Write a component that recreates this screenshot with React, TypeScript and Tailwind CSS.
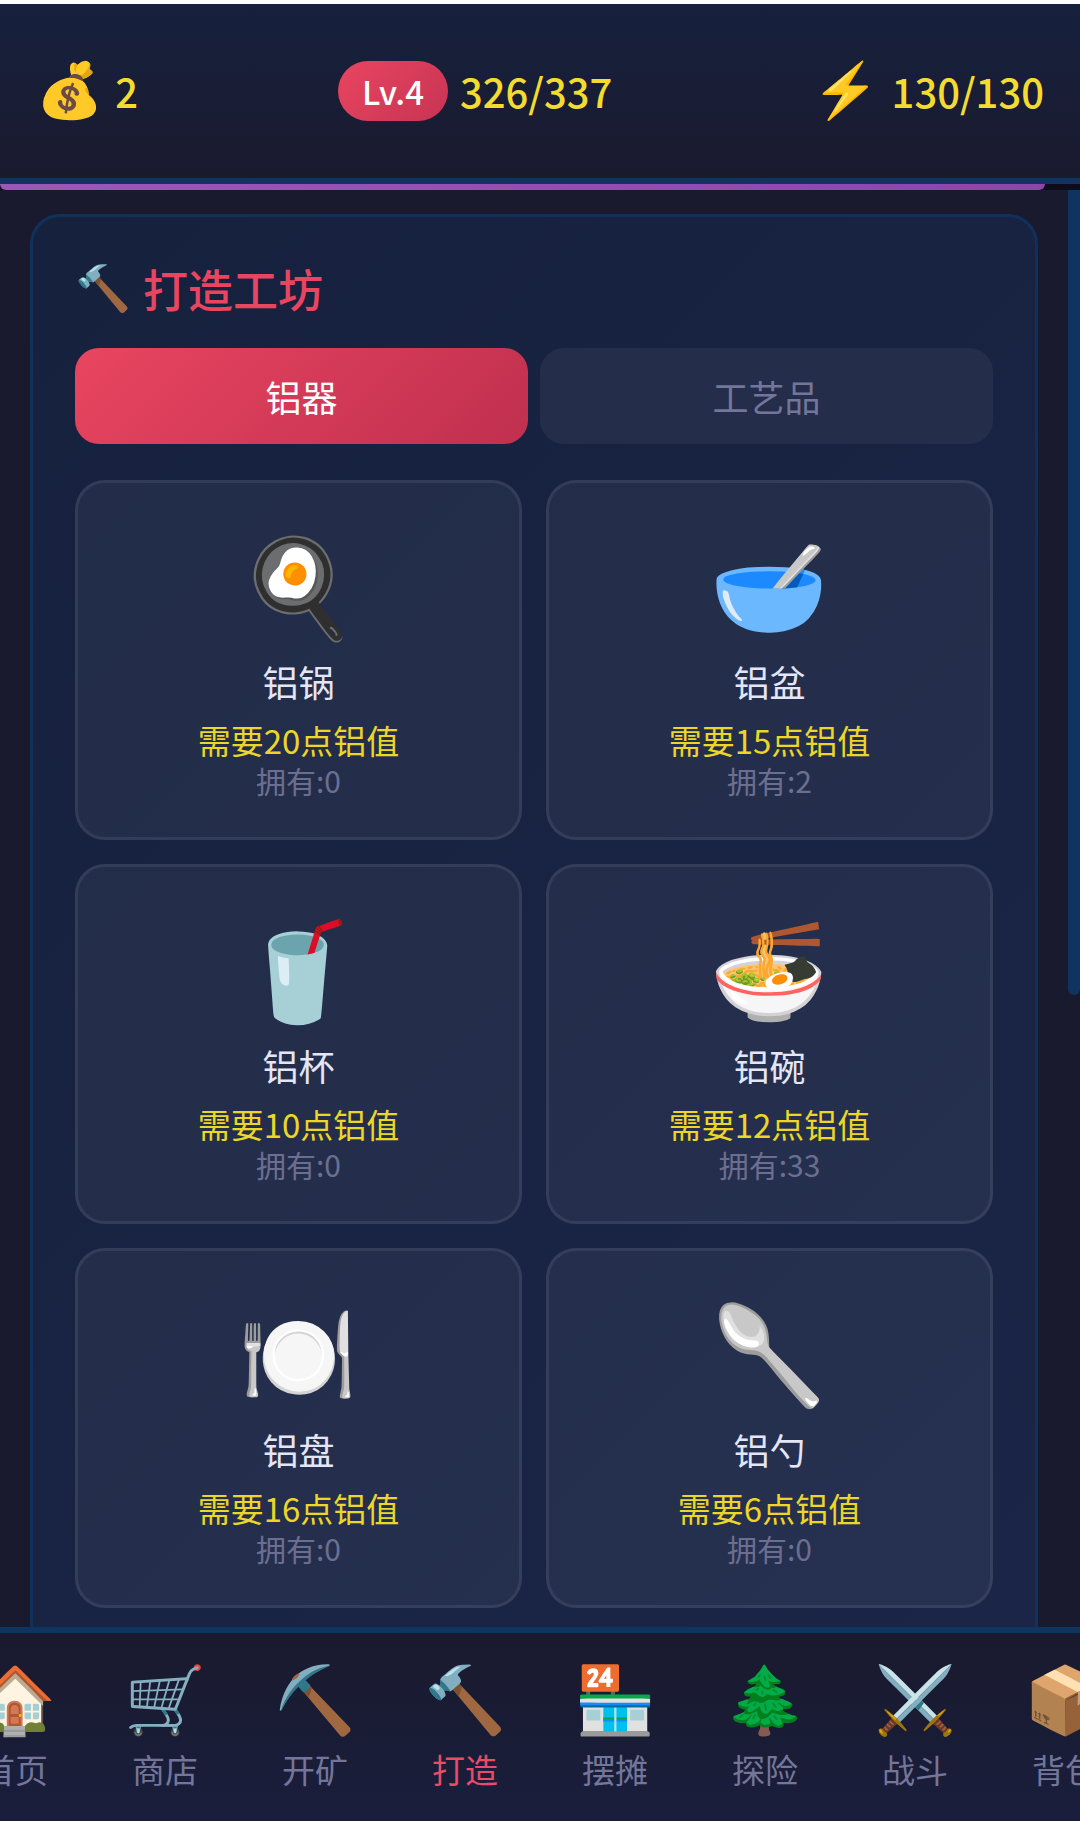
import { useState } from "react";

type Item = { icon: string; name: string; cost: number; owned: number };

const aluminium: Item[] = [
  { icon: "🍳", name: "铝锅", cost: 20, owned: 0 },
  { icon: "🥣", name: "铝盆", cost: 15, owned: 2 },
  { icon: "🥤", name: "铝杯", cost: 10, owned: 0 },
  { icon: "🍜", name: "铝碗", cost: 12, owned: 33 },
  { icon: "🍽️", name: "铝盘", cost: 16, owned: 0 },
  { icon: "🥄", name: "铝勺", cost: 6, owned: 0 },
];

const nav = [
  { icon: "🏠", label: "首页" },
  { icon: "🛒", label: "商店" },
  { icon: "⛏️", label: "开矿" },
  { icon: "🔨", label: "打造" },
  { icon: "🏪", label: "摆摊" },
  { icon: "🌲", label: "探险" },
  { icon: "⚔️", label: "战斗" },
  { icon: "📦", label: "背包" },
];

const tabs = ["铝器", "工艺品"];

function StatusBar() {
  return (
    <header className="flex h-[180px] shrink-0 items-center justify-between border-b-6 border-[#0f3460] bg-linear-to-b from-[#16213e] to-[#1a1a2e] px-9 text-[40px] leading-[60px] font-medium text-[#f2dc30]">
      <div className="flex items-center gap-3">
        <span className="font-['Noto_Color_Emoji',sans-serif] text-[54px]">💰</span>
        <span>2</span>
      </div>
      <div className="flex items-center gap-3">
        <span className="rounded-full bg-linear-135 from-[#e94560] to-[#c73453] px-6 text-[33px] text-white">Lv.4</span>
        <span>326/337</span>
      </div>
      <div className="flex items-center gap-3">
        <span className="font-['Noto_Color_Emoji',sans-serif] text-[54px]">⚡</span>
        <span>130/130</span>
      </div>
    </header>
  );
}

function ExperienceBar({ value, max }: { value: number; max: number }) {
  return (
    <div className="h-[6px] shrink-0 bg-[#0c0c1a]">
      <div
        className="h-full rounded-b-md bg-linear-to-r from-[#9b59b6] to-[#8e44ad]"
        style={{ width: `${(value / max) * 100}%` }}
      />
    </div>
  );
}

function ItemCard({ item }: { item: Item }) {
  return (
    <button
      type="button"
      className="flex h-[360px] flex-col items-center rounded-[30px] border-3 border-white/8 bg-white/5 pt-[51px]"
    >
      <span className="font-['Noto_Color_Emoji',sans-serif] text-[96px] leading-[108px]">{item.icon}</span>
      <span className="mt-3 text-[36px] leading-[54px] text-[#e4e6f6]">{item.name}</span>
      <span className="mt-3 text-[33px] leading-[40px] text-[#ecd626]">需要{item.cost}点铝值</span>
      <span className="text-[30px] leading-[40px] text-[#6c6e90]">拥有:{item.owned}</span>
    </button>
  );
}

export default function App() {
  const [tab, setTab] = useState(0);

  return (
    <div className="flex h-screen flex-col overflow-hidden border-t-4 border-b-5 border-white bg-[#1a1a2e] font-['Noto_Sans_CJK_SC',sans-serif]">
      <StatusBar />
      <ExperienceBar value={326} max={337} />

      <div className="flex min-h-0 flex-1">
        <main className="min-w-0 flex-1 overflow-hidden px-[30px] pt-6">
          <section className="rounded-[30px] border-3 border-[#0f3460]/80 bg-linear-135 from-[#16213e] to-[#1b2547] px-[42px] pt-[39px] pb-[42px]">
            <h1 className="flex items-center gap-3 text-[45px] leading-[66px] font-medium text-[#e94560]">
              <span className="font-['Noto_Color_Emoji',sans-serif]">🔨</span>
              打造工坊
            </h1>

            <div role="tablist" className="mt-[26px] grid grid-cols-2 gap-3">
              {tabs.map((label, i) => (
                <button
                  key={label}
                  type="button"
                  role="tab"
                  aria-selected={tab === i}
                  onClick={() => setTab(i)}
                  className={
                    tab === i
                      ? "h-24 rounded-3xl bg-linear-135 from-[#e94560] to-[#c0304f] text-[36px] leading-[54px] text-white"
                      : "h-24 rounded-3xl bg-white/5 text-[36px] leading-[54px] text-[#73769a]"
                  }
                >
                  {label}
                </button>
              ))}
            </div>

            <div className="mt-9 grid grid-cols-2 gap-6">
              {aluminium.map((item) => (
                <ItemCard key={item.name} item={item} />
              ))}
            </div>
          </section>
        </main>
        <div className="w-3 shrink-0">
          <div className="h-[56%] rounded-b-md bg-[#0f3460]" />
        </div>
      </div>

      <nav className="flex h-[194px] shrink-0 justify-center border-t-6 border-[#0f3460] bg-linear-to-b from-[#1a1a2e] to-[#191e3c]">
        {nav.map((entry) => (
          <a
            key={entry.label}
            href={`#${entry.label}`}
            aria-current={entry.label === "打造" ? "page" : undefined}
            className={
              entry.label === "打造"
                ? "flex w-[150px] shrink-0 flex-col items-center pt-8 text-[#e94b68]"
                : "flex w-[150px] shrink-0 flex-col items-center pt-8 text-[#73769a]"
            }
          >
            <span className="font-['Noto_Color_Emoji',sans-serif] text-[66px] leading-[72px]">{entry.icon}</span>
            <span className="mt-2 text-[33px] leading-[48px]">{entry.label}</span>
          </a>
        ))}
      </nav>
    </div>
  );
}
